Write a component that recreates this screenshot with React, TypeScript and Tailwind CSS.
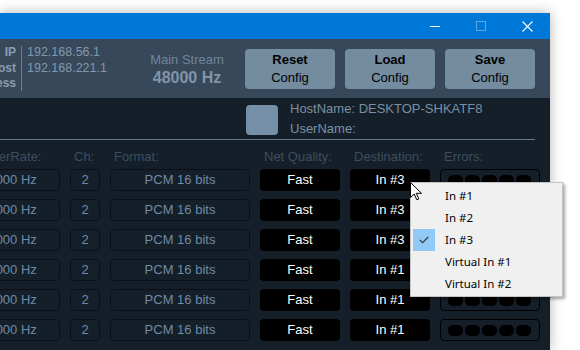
const destinations = ["In #3", "In #3", "In #3", "In #1", "In #1", "In #1"];
const menuItems = ["In #1", "In #2", "In #3", "Virtual In #1", "Virtual In #2"];

function TitleBar() {
  return (
    <div className="flex h-[26px] justify-end bg-[#0078d7]">
      <div className="flex w-[46px] items-center justify-center">
        <div className="h-px w-[10px] bg-white" />
      </div>
      <div className="flex w-[46px] items-center justify-center">
        <div className="h-[10px] w-[10px] border border-white/35" />
      </div>
      <div className="flex w-[46px] items-center justify-center">
        <svg width="11" height="11" viewBox="0 0 11 11">
          <path d="M0.5 0.5 L10.5 10.5 M10.5 0.5 L0.5 10.5" stroke="white" strokeWidth="1.1" />
        </svg>
      </div>
    </div>
  );
}

function HeaderButton({ top }: { top: string }) {
  return (
    <div className="flex h-[40px] w-[90px] flex-col items-center justify-center rounded-[4px] bg-[#738ca0] text-[13px] leading-[18px] text-black">
      <span className="font-bold">{top}</span>
      <span>Config</span>
    </div>
  );
}

function Header() {
  return (
    <div className="flex h-[59px] items-center bg-[#36485a]">
      <div className="-ml-[40px] w-[56px] text-right text-[12px] font-bold leading-[15.5px] text-[#8a9db1]">
        <div>IP</div>
        <div>Host</div>
        <div>Address</div>
      </div>
      <div className="ml-[5px] h-[45px] w-[118px] border-l border-[#6b8095] pl-[5px] text-[12.5px] leading-[16px] text-[#8499ad]">
        <div className="-mt-[2px]">
          <div>192.168.56.1</div>
          <div>192.168.221.1</div>
        </div>
      </div>
      <div className="w-[96px] text-center">
        <div className="text-[13px] leading-[18px] text-[#6f859a]">Main Stream</div>
        <div className="text-[16px] font-bold leading-[18px] text-[#8095a9]">48000 Hz</div>
      </div>
      <div className="ml-[10px] flex gap-[10px]">
        <HeaderButton top="Reset" />
        <HeaderButton top="Load" />
        <HeaderButton top="Save" />
      </div>
    </div>
  );
}

function Row({ dest }: { dest: string }) {
  const cell = "flex h-[22px] items-center justify-center rounded-[4px] border border-[#0a1016] text-[13px] text-[#6f8aa6]";
  const dark = "flex h-[22px] items-center justify-center rounded-[4px] bg-black text-[13px] text-white";
  return (
    <div className="flex gap-[10px]">
      <div className={`${cell} w-[102px]`}>48000 Hz</div>
      <div className={`${cell} w-[30px]`}>2</div>
      <div className={`${cell} w-[140px]`}>PCM 16 bits</div>
      <div className={`${dark} w-[80px]`}>Fast</div>
      <div className={`${dark} w-[80px]`}>{dest}</div>
      <div className="flex h-[22px] w-[100px] items-center gap-[2px] rounded-[4px] border border-black pl-[7px]">
        {[0, 1, 2, 3, 4].map((i) => (
          <div key={i} className="h-[11px] w-[15px] rounded-[5px] bg-black" />
        ))}
      </div>
    </div>
  );
}

function Body() {
  return (
    <div className="pt-[1px]">
      <div className="flex h-[40px] pl-[246px]">
        <div className="mt-[6px] h-[30px] w-[32px] rounded-[4px] bg-[#7590a6]" />
        <div className="ml-[12px] text-[13px] leading-[20px] text-[#7a90a5]">
          <div>HostName: DESKTOP-SHKATF8</div>
          <div>UserName:</div>
        </div>
      </div>
      <div className="h-px w-[535px] bg-[#5f788d]" />
      <div className="-ml-[42px] mt-[9px] flex h-[16px] gap-[10px] text-[13px] leading-[16px] text-[#3c4e60]">
        <div className="w-[102px] pl-[4px]">SamplerRate:</div>
        <div className="w-[30px] pl-[4px]">Ch:</div>
        <div className="w-[140px] pl-[4px]">Format:</div>
        <div className="w-[80px] whitespace-nowrap pl-[4px]">Net Quality:</div>
        <div className="w-[80px] pl-[4px]">Destination:</div>
        <div className="w-[100px] pl-[4px]">Errors:</div>
      </div>
      <div className="-ml-[42px] mt-[4px] flex flex-col gap-[8px]">
        {destinations.map((d, i) => (
          <Row key={i} dest={d} />
        ))}
      </div>
    </div>
  );
}

function DropMenu() {
  return (
    <div className="absolute left-[410px] top-[182px] h-[115px] w-[153px] border border-[#c4c4c4] bg-[#f0f0f0] pt-[2px] font-['Noto_Sans',sans-serif] text-[11.5px] text-black shadow-[2px_2px_3px_rgba(0,0,0,0.35)]">
      {menuItems.map((item) => (
        <div key={item} className="relative flex h-[22px] items-center pl-[34px]">
          {item === "In #3" && (
            <div className="absolute left-[2px] top-0 flex h-[22px] w-[22px] items-center justify-center bg-[#91c9f7]">
              <svg width="10" height="8" viewBox="0 0 10 8">
                <polyline points="0.8,3.8 3.6,6.6 9.2,1" fill="none" stroke="#3a3a3a" strokeWidth="1.2" />
              </svg>
            </div>
          )}
          {item}
        </div>
      ))}
    </div>
  );
}

function Cursor() {
  return (
    <svg className="absolute left-[410px] top-[182px]" width="13" height="19" viewBox="0 0 13 19">
      <path
        d="M0.5 0.5 L0.5 15.5 L4.2 12 L6.8 17.8 L8.8 16.9 L6.3 11.3 L11.5 11.3 Z"
        fill="white"
        stroke="black"
        strokeWidth="1"
        strokeLinejoin="miter"
      />
    </svg>
  );
}

export default function App() {
  return (
    <div className="relative h-[350px] w-[580px] overflow-hidden bg-white font-['Liberation_Sans',Arial,sans-serif]">
      <div className="mt-[13px] h-[337px] w-[550px] overflow-hidden bg-[#151f29] shadow-[0_0_12px_rgba(0,0,0,0.3)]">
        <TitleBar />
        <Header />
        <Body />
      </div>
      <DropMenu />
      <Cursor />
    </div>
  );
}
